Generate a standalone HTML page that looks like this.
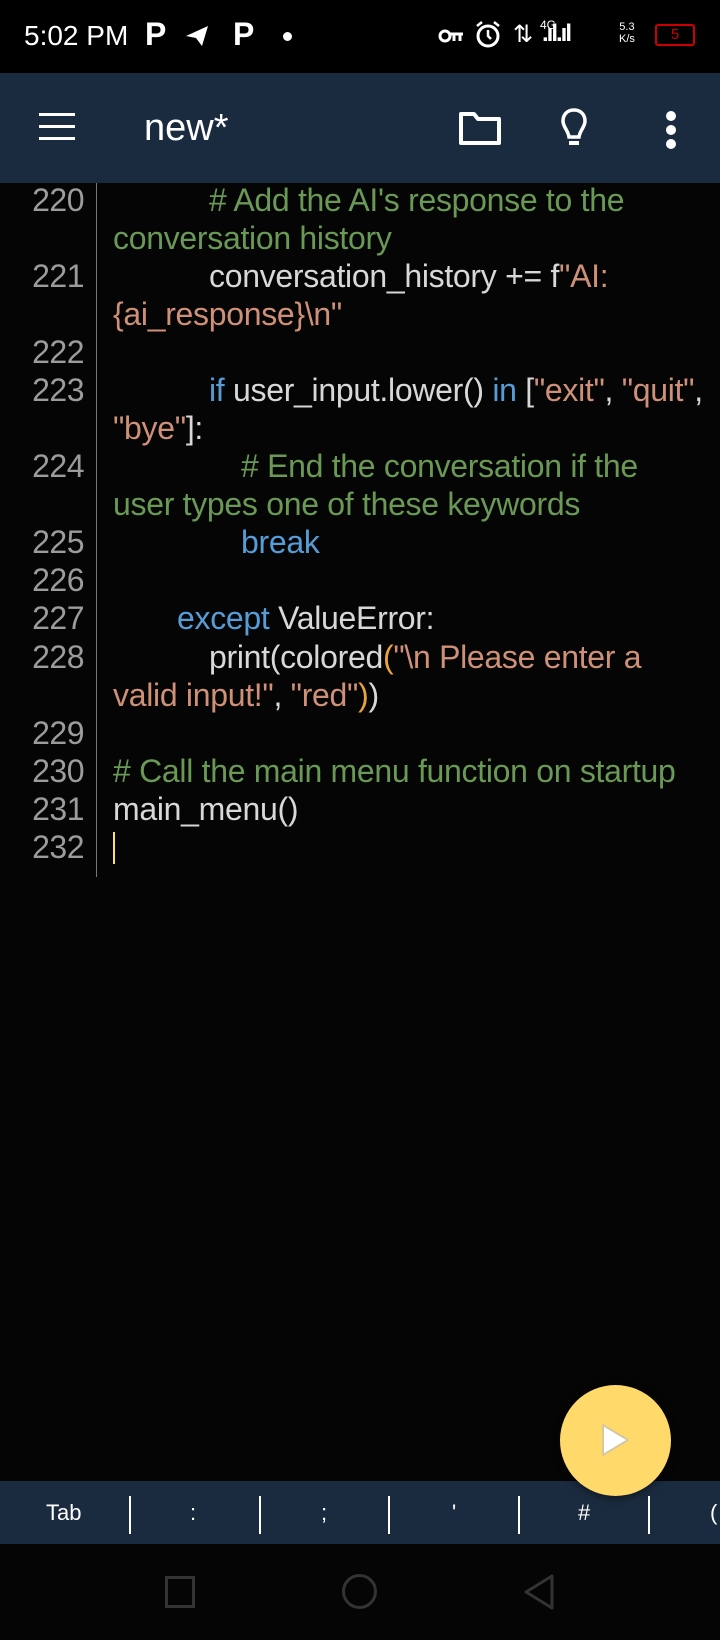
<!DOCTYPE html>
<html><head><meta charset="utf-8"><style>
*{margin:0;padding:0;box-sizing:border-box}
body{width:720px;height:1640px;background:#050505;position:relative;overflow:hidden;font-family:"Liberation Sans",sans-serif}
.sb{position:absolute;left:0;top:0;width:720px;height:73px;background:#000;color:#fff}
.tb{position:absolute;left:0;top:73px;width:720px;height:110px;background:#1b2b3f}
.ln{position:absolute;left:0;width:84px;text-align:right;color:#9c9c9c;font-size:32px;height:38px;line-height:38px;letter-spacing:-0.5px}
.cd{position:absolute;left:113px;color:#d8d8d8;font-size:32px;height:38px;line-height:38px;white-space:pre;letter-spacing:-0.3px}
.c{color:#6a9955}.k{color:#569cd6}.s{color:#ce9178}.o{color:#e8a33a}
.kb{position:absolute;left:0;top:1481px;width:720px;height:63px;background:#1b2b3f;color:#fff;font-size:22px}
.kb span{position:absolute;top:0;line-height:63px}
.sep{position:absolute;top:15px;width:2px;height:38px;background:#fff}
</style></head><body>
<div class="sb">
<div style="position:absolute;left:24px;top:20px;font-size:28px">5:02 PM</div>
<div style="position:absolute;left:145px;top:16px;font-size:32px;font-weight:bold">P</div>
<svg style="position:absolute;left:184px;top:24px" width="26" height="24"><path d="M2 12 L24 2 L18 22 L12 14 Z" fill="#fff"/></svg>
<div style="position:absolute;left:233px;top:16px;font-size:32px;font-weight:bold">P</div>
<div style="position:absolute;left:283px;top:32px;width:9px;height:9px;border-radius:50%;background:#fff"></div>
<svg style="position:absolute;left:438px;top:28px" width="26" height="16"><circle cx="7" cy="8" r="5" fill="none" stroke="#fff" stroke-width="3"/><path d="M12 6 H25 M16 6 V13 M22 6 V13" stroke="#fff" stroke-width="3"/></svg>
<svg style="position:absolute;left:474px;top:20px" width="28" height="30"><circle cx="14" cy="16" r="10" fill="none" stroke="#fff" stroke-width="3"/><path d="M14 10 V16 L17 19 M3 6 L8 2 M25 6 L20 2" stroke="#fff" stroke-width="2.5" fill="none"/></svg>
<div style="position:absolute;left:513px;top:20px;font-size:24px">⇅</div>
<div style="position:absolute;left:540px;top:18px;font-size:12px">4G</div>
<div style="position:absolute;left:542px;top:20px;font-size:24px;font-weight:bold;letter-spacing:-2px">.ıl.ıl</div>
<div style="position:absolute;left:619px;top:21px;font-size:11px;line-height:12px;text-align:center">5.3<br>K/s</div>
<div style="position:absolute;left:655px;top:24px;width:40px;height:22px;border:2px solid #c00;border-radius:3px;color:#c00;font-size:15px;text-align:center;line-height:18px">5</div>
</div>
<div class="tb">
<div style="position:absolute;left:39px;top:40px;width:36px;height:3px;background:#fff;box-shadow:0 12px 0 #fff,0 24px 0 #fff"></div>
<div style="position:absolute;left:144px;top:34px;font-size:38px;color:#fff">new*</div>
<svg style="position:absolute;left:458px;top:37px" width="44" height="36"><path d="M3 4 H16 L20 9 H41 V33 H3 Z" fill="none" stroke="#fff" stroke-width="4" stroke-linejoin="round"/></svg>
<svg style="position:absolute;left:560px;top:34px" width="28" height="42"><path d="M14 3 C6 3 3 9 3 14 C3 20 8 23 9 30 H19 C20 23 25 20 25 14 C25 9 22 3 14 3 Z" fill="none" stroke="#fff" stroke-width="3.5"/><rect x="9" y="34" width="10" height="4" fill="#fff"/></svg>
<div style="position:absolute;left:666px;top:38px;width:10px;height:10px;border-radius:50%;background:#fff;box-shadow:0 14px 0 #fff,0 28px 0 #fff"></div>
</div>
<div style="position:absolute;left:96px;top:183px;width:1px;height:694px;background:#777"></div>

<div class="ln" style="top:181px">220</div><div class="cd c" style="top:181px;left:209px"># Add the AI's response to the</div>
<div class="cd c" style="top:219px">conversation history</div>
<div class="ln" style="top:257px">221</div><div class="cd" style="top:257px;left:209px">conversation_history += f<span class="s">"AI:</span></div>
<div class="cd s" style="top:295px">{ai_response}\n"</div>
<div class="ln" style="top:333px">222</div>
<div class="ln" style="top:371px">223</div><div class="cd" style="top:371px;left:209px"><span class="k">if</span> user_input.lower() <span class="k">in</span> [<span class="s">"exit"</span>, <span class="s">"quit"</span>,</div>
<div class="cd" style="top:409px"><span class="s">"bye"</span>]:</div>
<div class="ln" style="top:447px">224</div><div class="cd c" style="top:447px;left:241px"># End the conversation if the</div>
<div class="cd c" style="top:485px">user types one of these keywords</div>
<div class="ln" style="top:523px">225</div><div class="cd k" style="top:523px;left:241px">break</div>
<div class="ln" style="top:561px">226</div>
<div class="ln" style="top:599px">227</div><div class="cd" style="top:599px;left:177px"><span class="k">except</span> ValueError:</div>
<div class="ln" style="top:638px">228</div><div class="cd" style="top:638px;left:209px">print(colored<span class="o">(</span><span class="s">"\n Please enter a</span></div>
<div class="cd" style="top:676px"><span class="s">valid input!"</span>, <span class="s">"red"</span><span class="o">)</span>)</div>
<div class="ln" style="top:714px">229</div>
<div class="ln" style="top:752px">230</div><div class="cd c" style="top:752px"># Call the main menu function on startup</div>
<div class="ln" style="top:790px">231</div><div class="cd" style="top:790px">main_menu()</div>
<div class="ln" style="top:828px">232</div>
<div style="position:absolute;left:113px;top:832px;width:2px;height:32px;background:#ffe066"></div>

<div class="kb">
<span style="left:46px">Tab</span>
<div class="sep" style="left:129px"></div><span style="left:190px">:</span>
<div class="sep" style="left:259px"></div><span style="left:321px">;</span>
<div class="sep" style="left:388px"></div><span style="left:452px">'</span>
<div class="sep" style="left:518px"></div><span style="left:578px">#</span>
<div class="sep" style="left:648px"></div><span style="left:710px">(</span>
</div>
<div style="position:absolute;left:560px;top:1385px;width:111px;height:111px;border-radius:50%;background:#ffd96a;box-shadow:0 3px 8px rgba(0,0,0,.4)"></div>
<svg style="position:absolute;left:600px;top:1422px" width="32" height="36"><path d="M3 3 L28 18 L3 33 Z" fill="#fff" stroke="#d8c8a0" stroke-width="2" stroke-linejoin="round"/></svg>
<div style="position:absolute;left:165px;top:1576px;width:30px;height:32px;border:3px solid #333"></div>
<div style="position:absolute;left:342px;top:1574px;width:35px;height:35px;border:3px solid #333;border-radius:50%"></div>
<svg style="position:absolute;left:522px;top:1573px" width="34" height="38"><path d="M30 3 V35 L4 19 Z" fill="none" stroke="#333" stroke-width="3" stroke-linejoin="round"/></svg>
</body></html>
